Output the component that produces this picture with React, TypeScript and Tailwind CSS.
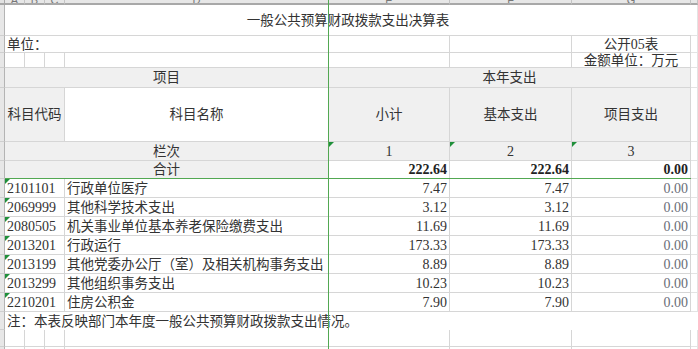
import React from 'react'

const rows = [
  { code: '2101101', name: '行政单位医疗', a: '7.47', b: '7.47', c: '0.00' },
  { code: '2069999', name: '其他科学技术支出', a: '3.12', b: '3.12', c: '0.00' },
  { code: '2080505', name: '机关事业单位基本养老保险缴费支出', a: '11.69', b: '11.69', c: '0.00' },
  { code: '2013201', name: '行政运行', a: '173.33', b: '173.33', c: '0.00' },
  { code: '2013199', name: '其他党委办公厅（室）及相关机构事务支出', a: '8.89', b: '8.89', c: '0.00' },
  { code: '2013299', name: '其他组织事务支出', a: '10.23', b: '10.23', c: '0.00' },
  { code: '2210201', name: '住房公积金', a: '7.90', b: '7.90', c: '0.00' },
]

const letters = ['A', 'B', 'C', 'D', 'E', 'F', 'G', '']

function Flag() {
  return <span className="absolute left-0 top-0 w-0 h-0 border-t-[5px] border-t-[#1f8f3a] border-r-[5px] border-r-transparent" />
}

function Strip() {
  return <div className="bg-[#e7e7e7] border-r border-r-[#b4b4b4] border-b border-b-[#cfcfcf]" />
}

function Cell({ className = '', children }: { className?: string; children?: React.ReactNode }) {
  return (
    <div className={`relative flex items-center whitespace-nowrap border-r border-b border-[#d6d6d6] ${className}`}>
      {children}
    </div>
  )
}

export default function App() {
  return (
    <div className="relative w-[698px] h-[349px] overflow-hidden bg-white text-[#333] font-['Liberation_Serif','Noto_Sans_CJK_SC',serif] text-[13.5px] leading-[15px]">
      <div className="grid grid-cols-[5px_20px_20px_20px_264px_121px_122px_119px_7px] grid-rows-[5px_31px_17px_15px_20px_54px_19px_18px_19px_19px_19px_19px_19px_19px_19px_18px_17px_20px]">

        {/* column letters */}
        <div className="bg-[#e2e2e2] border-r border-b-2 border-[#a8a8a8]" />
        {letters.map((l, i) => (
          <div key={i} className="flex items-end justify-center overflow-hidden bg-[#e7e7e7] border-r border-r-[#c4c4c4] border-b-2 border-b-[#a8a8a8]">
            <span className="text-[11px] leading-none text-[#777] font-['Liberation_Sans',sans-serif] -mb-[3px]">{l}</span>
          </div>
        ))}

        {/* title */}
        <Strip />
        <Cell className="col-span-7 justify-center border-r-0">一般公共预算财政拨款支出决算表</Cell>
        <Cell className="border-[#e3e3e3]" />

        {/* unit */}
        <Strip />
        <Cell className="col-span-4 pl-[2px]">单位：</Cell>
        <Cell />
        <Cell />
        <Cell className="justify-center">公开<span className="text-[14px]">05</span>表</Cell>
        <Cell className="border-[#e3e3e3]" />

        <Strip />
        <Cell />
        <Cell />
        <Cell />
        <Cell />
        <Cell />
        <Cell />
        <Cell className="justify-center">金额单位：万元</Cell>
        <Cell className="border-[#e3e3e3]" />

        {/* header */}
        <Strip />
        <Cell className="col-span-4 justify-center bg-[#f0f0f0]">项目</Cell>
        <Cell className="col-span-3 justify-center bg-[#f0f0f0]">本年支出</Cell>
        <Cell className="border-[#e3e3e3]" />

        <Strip />
        <Cell className="col-span-3 justify-center bg-[#f0f0f0]">科目代码</Cell>
        <Cell className="justify-center">科目名称</Cell>
        <Cell className="justify-center bg-[#f0f0f0]">小计</Cell>
        <Cell className="justify-center bg-[#f0f0f0]">基本支出</Cell>
        <Cell className="justify-center bg-[#f0f0f0]">项目支出</Cell>
        <Cell className="border-[#e3e3e3]" />

        <Strip />
        <Cell className="col-span-4 justify-center bg-[#f0f0f0]">栏次</Cell>
        <Cell className="justify-center bg-[#f0f0f0] text-[14px]"><Flag />1</Cell>
        <Cell className="justify-center bg-[#f0f0f0] text-[14px]"><Flag />2</Cell>
        <Cell className="justify-center bg-[#f0f0f0] text-[14px]"><Flag />3</Cell>
        <Cell className="border-[#e3e3e3]" />

        <Strip />
        <Cell className="col-span-4 justify-center bg-[#f0f0f0]">合计</Cell>
        <Cell className="justify-end pr-[2px] font-bold text-[14px] text-[#222]">222.64</Cell>
        <Cell className="justify-end pr-[2px] font-bold text-[14px] text-[#222]">222.64</Cell>
        <Cell className="justify-end pr-[2px] font-bold text-[14px] text-[#222]">0.00</Cell>
        <Cell className="border-[#e3e3e3]" />

        {/* data */}
        {rows.map(r => (
          <React.Fragment key={r.code}>
            <Strip />
            <Cell className="col-span-3 pl-[2px] text-[14px]"><Flag />{r.code}</Cell>
            <Cell className="pl-[2px]">{r.name}</Cell>
            <Cell className="justify-end pr-[2px] text-[14px]">{r.a}</Cell>
            <Cell className="justify-end pr-[2px] text-[14px]">{r.b}</Cell>
            <Cell className="justify-end pr-[2px] text-[14px] text-[#6b6e78]">{r.c}</Cell>
            <Cell className="border-[#e3e3e3]" />
          </React.Fragment>
        ))}

        {/* note */}
        <Strip />
        <div className="col-span-7 flex items-center whitespace-nowrap pl-[2px]">注：本表反映部门本年度一般公共预算财政拨款支出情况。</div>
        <div />

        <Strip />
        <Cell />
        <Cell />
        <Cell />
        <Cell />
        <Cell />
        <Cell />
        <Cell />
        <Cell className="border-[#e3e3e3]" />

        <Strip />
        <Cell />
        <Cell />
        <Cell />
        <Cell />
        <Cell />
        <Cell />
        <Cell />
        <Cell className="border-[#e3e3e3]" />
      </div>

      {/* freeze lines */}
      <div className="absolute left-[328px] top-0 h-full w-px bg-[#52a852]" />
      <div className="absolute left-[5px] top-[178px] w-[686px] h-px bg-[#52a852]" />
    </div>
  )
}
